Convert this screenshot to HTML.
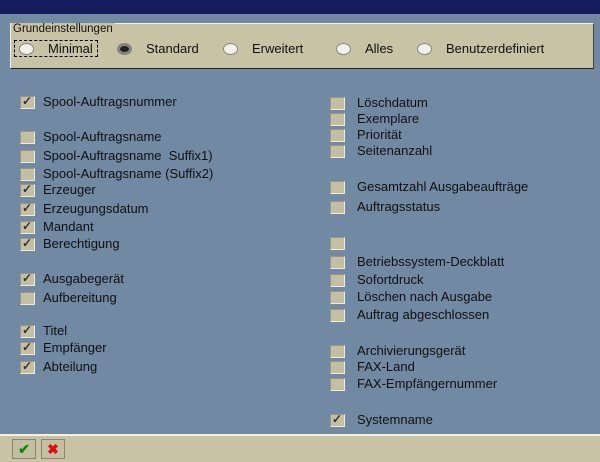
<!DOCTYPE html>
<html><head><style>
body{margin:0;width:600px;height:460px;background:#7189a3;position:relative;overflow:hidden;font-family:"Liberation Sans",sans-serif;font-size:13px;color:#101010}
.t{position:absolute;left:0;top:0;width:600px;height:14px;background:#141c5c}
.grp{position:absolute;left:10px;top:23px;width:582px;height:44px;background:#c9c3a6;border:1px solid #f4f0e0;border-right-color:#404040;border-bottom-color:#202020}
.lab{position:absolute;left:11px;top:23px;font-size:11.5px;background:#c9c3a6;padding:0 2px}
.r{position:absolute;top:41px;height:15px;line-height:15px}
.rb{display:inline-block;width:13px;height:10px;border-radius:50%;background:#f4f2e8;border:1px solid #888;vertical-align:middle;margin-right:14px;margin-top:-2px}
.rb.on{background:#222;box-shadow:inset 0 0 0 2px #888}
.cb{position:absolute;width:13px;height:11px;background:#c4bea2;border:1px solid #9a9480;border-right-color:#f0ecdc;border-bottom-color:#f0ecdc}
.cb.c:after{content:"✓";position:absolute;left:1px;top:-3px;font-size:12px;color:#333;font-weight:bold}
.l{position:absolute;height:15px;line-height:15px}
.bot{position:absolute;left:0;top:434px;width:600px;height:26px;background:#c9c3a6;border-top:2px solid #f4f0e0}
.btn{position:absolute;top:3px;width:22px;height:18px;border:1px solid #8a8470;background:#c4bea2;text-align:center;line-height:18px;font-weight:bold;font-size:14px}
</style></head><body>
<div class="t"></div>
<div class="grp"></div>
<div class="lab">Grundeinstellungen</div>
<div class="r" style="left:14px;border:1px dashed #000;padding:0 4px;top:40px">
<span class="rb"></span>Minimal</div>
<div class="r" style="left:117px"><span class="rb on"></span>Standard</div>
<div class="r" style="left:223px"><span class="rb"></span>Erweitert</div>
<div class="r" style="left:336px"><span class="rb"></span>Alles</div>
<div class="r" style="left:417px"><span class="rb"></span>Benutzerdefiniert</div>

<div class="cb c" style="left:20px;top:96px"></div><div class="l" style="left:43px;top:94px">Spool-Auftragsnummer</div>
<div class="cb" style="left:20px;top:131px"></div><div class="l" style="left:43px;top:129px">Spool-Auftragsname</div>
<div class="cb" style="left:20px;top:150px"></div><div class="l" style="left:43px;top:148px">Spool-Auftragsname&nbsp; Suffix1)</div>
<div class="cb" style="left:20px;top:168px"></div><div class="l" style="left:43px;top:166px">Spool-Auftragsname (Suffix2)</div>
<div class="cb c" style="left:20px;top:184px"></div><div class="l" style="left:43px;top:182px">Erzeuger</div>
<div class="cb c" style="left:20px;top:203px"></div><div class="l" style="left:43px;top:201px">Erzeugungsdatum</div>
<div class="cb c" style="left:20px;top:221px"></div><div class="l" style="left:43px;top:219px">Mandant</div>
<div class="cb c" style="left:20px;top:238px"></div><div class="l" style="left:43px;top:236px">Berechtigung</div>
<div class="cb c" style="left:20px;top:273px"></div><div class="l" style="left:43px;top:271px">Ausgabegerät</div>
<div class="cb" style="left:20px;top:292px"></div><div class="l" style="left:43px;top:290px">Aufbereitung</div>
<div class="cb c" style="left:20px;top:325px"></div><div class="l" style="left:43px;top:323px">Titel</div>
<div class="cb c" style="left:20px;top:342px"></div><div class="l" style="left:43px;top:340px">Empfänger</div>
<div class="cb c" style="left:20px;top:361px"></div><div class="l" style="left:43px;top:359px">Abteilung</div>

<div class="cb" style="left:330px;top:97px"></div><div class="l" style="left:357px;top:95px">Löschdatum</div>
<div class="cb" style="left:330px;top:113px"></div><div class="l" style="left:357px;top:111px">Exemplare</div>
<div class="cb" style="left:330px;top:129px"></div><div class="l" style="left:357px;top:127px">Priorität</div>
<div class="cb" style="left:330px;top:145px"></div><div class="l" style="left:357px;top:143px">Seitenanzahl</div>
<div class="cb" style="left:330px;top:181px"></div><div class="l" style="left:357px;top:179px">Gesamtzahl Ausgabeaufträge</div>
<div class="cb" style="left:330px;top:201px"></div><div class="l" style="left:357px;top:199px">Auftragsstatus</div>
<div class="cb" style="left:330px;top:237px"></div>
<div class="cb" style="left:330px;top:256px"></div><div class="l" style="left:357px;top:254px">Betriebssystem-Deckblatt</div>
<div class="cb" style="left:330px;top:274px"></div><div class="l" style="left:357px;top:272px">Sofortdruck</div>
<div class="cb" style="left:330px;top:291px"></div><div class="l" style="left:357px;top:289px">Löschen nach Ausgabe</div>
<div class="cb" style="left:330px;top:309px"></div><div class="l" style="left:357px;top:307px">Auftrag abgeschlossen</div>
<div class="cb" style="left:330px;top:345px"></div><div class="l" style="left:357px;top:343px">Archivierungsgerät</div>
<div class="cb" style="left:330px;top:361px"></div><div class="l" style="left:357px;top:359px">FAX-Land</div>
<div class="cb" style="left:330px;top:378px"></div><div class="l" style="left:357px;top:376px">FAX-Empfängernummer</div>
<div class="cb c" style="left:330px;top:414px"></div><div class="l" style="left:357px;top:412px">Systemname</div>

<div class="bot">
<div class="btn" style="left:12px;color:#0a8a0a">✔</div>
<div class="btn" style="left:41px;color:#e01010">✖</div>
</div>
</body></html>
